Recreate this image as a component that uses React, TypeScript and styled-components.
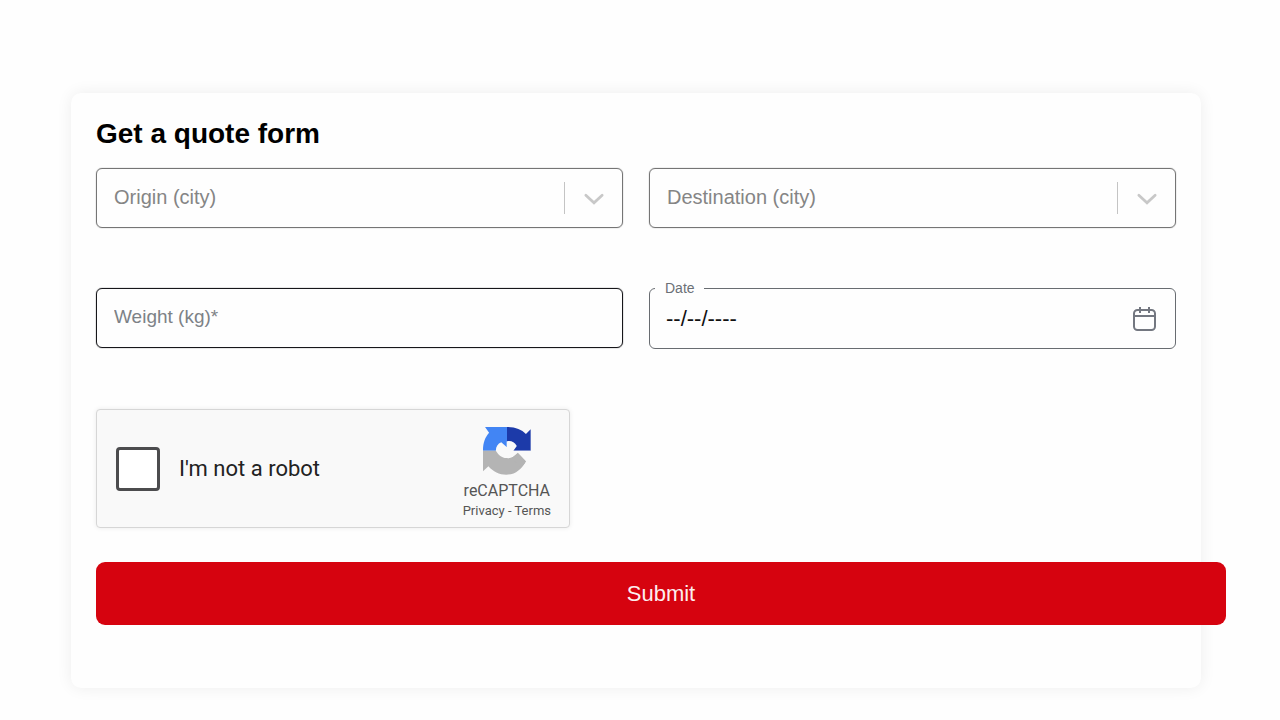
import React from 'react';
import styled, { createGlobalStyle } from 'styled-components';

const GlobalStyle = createGlobalStyle`
  *, *::before, *::after { box-sizing: border-box; }
  body {
    margin: 0;
    background: #fefefe;
    font-family: "Liberation Sans", Arial, sans-serif;
    color: #000;
  }
`;

const Page = styled.main`
  padding: 93px 79px 32px 71px;
`;

const Card = styled.form`
  padding: 25px 25px 63px;
  background: #fefefe;
  border-radius: 10px;
  box-shadow: 0 0 16px rgba(0, 0, 0, 0.07);
`;

const Title = styled.h1`
  margin: 0 0 18px;
  font-size: 28px;
  line-height: 32px;
  font-weight: 700;
`;

const Fields = styled.div`
  display: grid;
  grid-template-columns: 1fr 1fr;
  column-gap: 26px;
  row-gap: 60px;
  align-items: start;
`;

const FieldBox = styled.div<{ $color: string }>`
  display: flex;
  align-items: center;
  height: 60px;
  border: 1px solid ${({ $color }) => $color};
  border-radius: 6px;
  box-shadow: 0 0 1px ${({ $color }) => $color};
`;

const Select = styled.select`
  flex: 1;
  min-width: 0;
  height: 100%;
  padding: 0 17px 2px;
  border: 0;
  outline: 0;
  appearance: none;
  background: transparent;
  color: #858585;
  font: 20px "Liberation Sans", Arial, sans-serif;
`;

const Indicator = styled.span`
  display: flex;
  align-items: center;
  justify-content: center;
  width: 58px;
  height: 32px;
  border-left: 1px solid #c4c4c4;
  color: #c8c8c8;
  pointer-events: none;
`;

const WeightInput = styled.input`
  flex: 1;
  min-width: 0;
  height: 100%;
  padding: 0 17px 2px;
  border: 0;
  outline: 0;
  background: transparent;
  font: 19px "Liberation Sans", Arial, sans-serif;
  &::placeholder { color: #7d8287; opacity: 1; }
`;

const DateField = styled.fieldset`
  min-width: 0;
  margin: -8px 0 0;
  padding: 0 19px 0 5px;
  border: 1px solid #686c71;
  border-radius: 6px;
`;

const DateLegend = styled.legend`
  padding: 0 9px 0 10px;
  color: #6b7076;
  font-size: 14px;
  line-height: 16px;
`;

const DateRow = styled.div`
  display: flex;
  align-items: center;
  height: 52px;
  padding-bottom: 6px;
`;

const DateInput = styled.input`
  flex: 1;
  min-width: 0;
  padding: 0 11px;
  border: 0;
  outline: 0;
  background: transparent;
  color: #111;
  font: 22px "Liberation Sans", Arial, sans-serif;
`;

const IconButton = styled.button`
  display: flex;
  padding: 0;
  border: 0;
  background: none;
  color: #737780;
`;

const Captcha = styled.div`
  display: flex;
  align-items: center;
  justify-content: space-between;
  max-width: 474px;
  height: 119px;
  margin: 60px 0 34px;
  padding: 0 18px 0 19px;
  background: #f9f9f9;
  border: 1px solid #d6d6d6;
  border-radius: 4px;
  box-shadow: 0 0 5px rgba(0, 0, 0, 0.08);
  font-family: Roboto, sans-serif;
`;

const RobotLabel = styled.label`
  display: flex;
  align-items: center;
  gap: 19px;
  color: #222;
  font-size: 22px;
  line-height: 26px;
`;

const RobotCheck = styled.input`
  width: 44px;
  height: 44px;
  margin: 0;
  appearance: none;
  background: #fff;
  border: 3px solid #4c4c4e;
  border-radius: 4px;
`;

const Brand = styled.div`
  display: flex;
  flex-direction: column;
  align-items: center;
  padding-top: 10px;
  color: #555;
`;

const BrandName = styled.span`
  margin-top: 6px;
  font-size: 16px;
  line-height: 20px;
`;

const BrandLinks = styled.span`
  font-size: 13px;
  line-height: 20px;
  a { color: inherit; text-decoration: none; }
`;

const Submit = styled.button`
  display: block;
  width: calc(100% + 50px);
  height: 63px;
  padding: 0;
  border: 0;
  border-radius: 9px;
  background: #d6030f;
  color: #fdeeee;
  font: 22px "Liberation Sans", Arial, sans-serif;
`;

const Chevron = () => (
  <svg width="32" height="32" viewBox="0 0 20 20" fill="none" stroke="currentColor" strokeWidth="1.7" strokeLinecap="round" aria-hidden="true">
    <path d="M4.9 8.3L10 13L15.1 8.3" />
  </svg>
);

const Calendar = () => (
  <svg width="24" height="26" viewBox="0 0 24 26" fill="none" stroke="currentColor" strokeWidth="2" aria-hidden="true">
    <rect x="2" y="4" width="21" height="20" rx="3.5" />
    <path d="M2 10h21" />
    <path d="M8 1v6M17 1v6" />
  </svg>
);

const CaptchaLogo = () => (
  <svg width="48" height="48" viewBox="22 17 142 142" aria-hidden="true">
    <path fill="#4285f4" d="M28 17H93V87H22C22 63 28 48 40 34Z" />
    <path fill="#1c3aa9" d="M93 17C118 17 136 24 149 38L163 24V87H93Z" />
    <path fill="#b4b4b4" d="M22 87H93L127 90L149 118C136 142 117 158 91 158C70 158 52 149 38 133L22 148Z" />
    <path fill="#f9f9f9" d="M60 87C60 75 66 66 76 62L92 76V60C104 56 115 62 122 73L112 87H163L149 119L125 95C116 105 104 110 92 109C77 108 68 100 60 87Z" />
    <path fill="#b4b4b4" d="M125 93L149 118C145 126 139 133 132 138L108 108Z" />
  </svg>
);

const CitySelect = ({ id, label }: { id: string; label: string }) => (
  <FieldBox $color="#757575">
    <Select id={id} aria-label={label} defaultValue="">
      <option value="">{label}</option>
    </Select>
    <Indicator>
      <Chevron />
    </Indicator>
  </FieldBox>
);

export default function App() {
  return (
    <>
      <GlobalStyle />
      <Page>
        <Card onSubmit={(e: React.FormEvent) => e.preventDefault()}>
          <Title>Get a quote form</Title>
          <Fields>
            <CitySelect id="origin" label="Origin (city)" />
            <CitySelect id="destination" label="Destination (city)" />
            <FieldBox $color="#16161a">
              <WeightInput id="weight" aria-label="Weight (kg)" placeholder="Weight (kg)*" />
            </FieldBox>
            <DateField>
              <DateLegend>
                <label htmlFor="date">Date</label>
              </DateLegend>
              <DateRow>
                <DateInput id="date" type="text" defaultValue="--/--/----" />
                <IconButton type="button" aria-label="Open calendar">
                  <Calendar />
                </IconButton>
              </DateRow>
            </DateField>
          </Fields>
          <Captcha>
            <RobotLabel htmlFor="robot">
              <RobotCheck id="robot" type="checkbox" />
              I'm not a robot
            </RobotLabel>
            <Brand>
              <CaptchaLogo />
              <BrandName>reCAPTCHA</BrandName>
              <BrandLinks>
                <a href="#privacy">Privacy</a> - <a href="#terms">Terms</a>
              </BrandLinks>
            </Brand>
          </Captcha>
          <Submit type="submit">Submit</Submit>
        </Card>
      </Page>
    </>
  );
}
